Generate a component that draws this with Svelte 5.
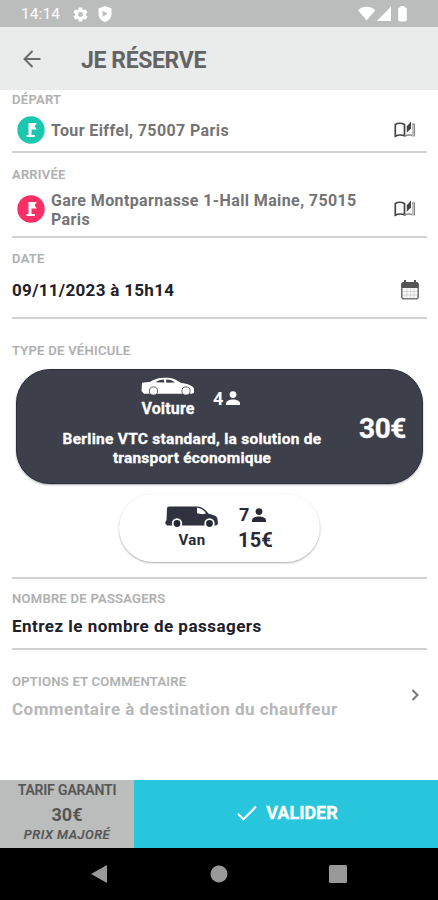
<script>
  const places = [
    { label: 'DÉPART', kind: 'from', lines: ['Tour Eiffel, 75007 Paris'] },
    { label: 'ARRIVÉE', kind: 'to', lines: ['Gare Montparnasse 1-Hall Maine, 75015', 'Paris'] }
  ];
</script>

{#snippet person()}
  <svg class="person" viewBox="0 0 14 14"><circle cx="7" cy="3.6" r="3.4" /><path d="M0 14v-1.8C0 9.6 4 8.4 7 8.4s7 1.2 7 3.8V14z" /></svg>
{/snippet}

<div class="screen">
  <div class="status">
    <span class="clock">14:14</span>
    <svg class="gear" viewBox="0 0 24 24"><path fill-rule="evenodd" d="M19.4 13c0-.3.1-.6.1-1s0-.7-.1-1l2.1-1.600c.2-.1.3-.4.1-.6l-2-3.500c-.1-.2-.4-.3-.6-.2l-2.500 1a7 7 0 0 0-1.700-1l-.4-2.600c0-.3-.2-.4-.5-.4h-4c-.2 0-.4.200-.5.400l-.4 2.600a8 8 0 0 0-1.700 1l-2.500-1c-.2-.1-.5 0-.6.200l-2 3.500c-.1.200-.1.500.1.600L4.500 11a8 8 0 0 0 0 2l-2.100 1.600c-.2.200-.2.400-.1.600l2 3.500c.1.200.4.300.6.200l2.500-1a7 7 0 0 0 1.700 1l.4 2.600c0 .3.200.5.500.5h4c.2 0 .4-.2.500-.5l.4-2.600a8 8 0 0 0 1.700-1l2.500 1c.2.100.5 0 .6-.2l2-3.500c.1-.2.100-.5-.1-.6zM12 15.500a3.500 3.500 0 1 1 0-7 3.500 3.500 0 0 1 0 7z" /></svg>
    <svg class="shield" viewBox="0 0 14 16"><path fill-rule="evenodd" d="M7 0l6.500 2.400V8c0 4-3 7-6.500 8C3.500 15 .5 12 .5 8V2.400zM4.700 4.800v6l5-3z" /></svg>
    <svg class="signals" viewBox="0 0 50 16"><path d="M0 4.200C4.500-.3 12.800-.3 17.300 4.200L8.700 14.500zM33 .5V15H18.800zM42.500 1.400V0h4v1.400h1.300q1 0 1 1V14q0 1.400-1.400 1.400h-5.800q-1.400 0-1.400-1.400V2.400q0-1 1-1z" /></svg>
  </div>

  <header>
    <svg class="back" viewBox="0 0 18 18"><path d="M17.500 9H1.500M9.500 1L1.500 9l8 8" /></svg>
    <h1>JE RÉSERVE</h1>
  </header>

  <main>
    {#each places as p}
      <section class={p.kind}>
        <div class="label">{p.label}</div>
        <div class="place">
          <svg class="pin" viewBox="0 0 28 28"><circle cx="14" cy="14" r="13.700" /><path d="M11.500 7h8.300l-2.200 3.200 2.200 3.300h-5.300v5.500h3.300v2H9.500v-2h2z" /></svg>
          <div class="address">{#each p.lines as line}<div>{line}</div>{/each}</div>
          <svg class="book" viewBox="0 0 22 18"><path class="pages" d="M1.300 3.500Q5.500 1 10.500 3.500V14.800Q5.500 13 1.300 15.200z" /><path class="edge" d="M10.500 15Q15 13 19 14.800M18 3.200H20.300V15.500" /><path class="edge light" d="M18.800 3.200V15" /><path class="quill" d="M12.800 5.200L17 .5V7.500L12.800 11.800z" /></svg>
        </div>
      </section>
    {/each}

    <section class="date">
      <div class="label">DATE</div>
      <div class="row"><span class="value when">09/11/2023 à 15h14</span>
        <svg class="calendar" viewBox="0 0 18 20"><rect x=".8" y="2.800" width="16.400" height="16" rx="2" fill="#f7f7f7" stroke="#777" stroke-width="1.600" /><path d="M.5 8V4q0-2 2-2h13q2 0 2 2v4z" fill="#555" /><path d="M4 0v4M14 0v4" stroke="#555" stroke-width="2" /><path d="M2 11.500h14M2 15h14M6 8.500v9M9.500 8.500v9M13 8.500v9" stroke="#ccc" stroke-width=".7" /></svg>
      </div>
    </section>

    <section class="type">
      <div class="label">TYPE DE VÉHICULE</div>
      <div class="vehicle sedan">
        <div class="details">
          <div class="summary">
            <div class="model">
              <svg class="car" viewBox="0 0 54 18"><path fill="#fff" d="M1 5.200L9.500 4.200C15 .5 20 .2 27 .3c6 .2 9.500 3 13 5.200 7 .8 11.500 2.500 13 5.500v4.200l-2 1H3L.5 13.500z" /><path fill="#3d3f4b" d="M14.500 4.800Q17.500 2.200 22.800 2l.6 3zM25 2c4.500 0 6.500 1 9 3l-8.500.2z" /><g fill="#fff" stroke="#3d3f4b" stroke-width=".8"><circle cx="12.500" cy="13.500" r="4.100" /><circle cx="45" cy="13.500" r="4.100" /></g></svg>
              <span>Voiture</span>
            </div>
            <div class="seats">4{@render person()}</div>
          </div>
          <div class="description"><div class="d1">Berline VTC standard, la solution de</div><div class="d2">transport économique</div></div>
        </div>
        <div class="price">30€</div>
      </div>
      <div class="vehicle van">
        <div class="model">
          <svg class="vanicon" viewBox="0 0 54 24"><path fill="#30323f" d="M2 3.500Q2 1.500 4 1.500h28c6 0 9 4.500 12 7.500 5 .8 8 2 8.500 5l.5 5-2 1.500H2L0 18l1.500-3z" /><path fill="#fff" d="M32 2.700c4 .2 7 2.700 9 5.700l-3.500.8-5.500-1z" /><g fill="#252735" stroke="#fff" stroke-width="1.800"><circle cx="12" cy="18.500" r="4.300" /><circle cx="44.500" cy="18.500" r="4.300" /></g></svg>
          <span>Van</span>
        </div>
        <div class="offer"><div class="seats">7{@render person()}</div><div class="cost">15€</div></div>
      </div>
    </section>

    <section class="passengers">
      <div class="label">NOMBRE DE PASSAGERS</div>
      <div class="value count">Entrez le nombre de passagers</div>
    </section>

    <section class="options">
      <div>
        <div class="label">OPTIONS ET COMMENTAIRE</div>
        <div class="value comment">Commentaire à destination du chauffeur</div>
      </div>
      <svg class="chevron" viewBox="0 0 8 12"><path d="M1.500 1l5 5-5 5" /></svg>
    </section>
  </main>

  <footer>
    <div class="fare"><div class="guarantee">TARIF GARANTI</div><div class="amount">30€</div><div class="raised">PRIX MAJORÉ</div></div>
    <button><svg viewBox="0 0 20 16"><path d="M1 8.800l5.500 5.500L19 1.500" /></svg><span>VALIDER</span></button>
  </footer>

  <nav>
    <svg viewBox="0 0 18 18"><path d="M17 0v18L1 9z" /></svg>
    <svg viewBox="0 0 18 18"><circle cx="9" cy="9" r="8.500" /></svg>
    <svg viewBox="0 0 18 18"><rect width="18" height="18" rx="1.500" /></svg>
  </nav>
</div>

<style>
  :global(body) { margin: 0; background: #fff; }
  * { box-sizing: border-box; }
  svg { display: block; flex: none; }
  .screen { width: 438px; height: 900px; display: flex; flex-direction: column; font-family: Roboto, sans-serif; font-weight: 700; background: #fff; overflow: hidden; white-space: nowrap; }
  .status { height: 27px; background: #bbbdbc; display: flex; align-items: center; padding: 1px 30px 0 21px; fill: #fff; }
  .clock { color: #fff; font-size: 15.500px; font-weight: 400; line-height: 26px; width: 51px; letter-spacing: .1px; }
  .gear { width: 17px; height: 17px; }
  .shield { width: 14px; height: 16px; margin-left: 9px; }
  .signals { width: 50px; height: 16px; margin-left: auto; }
  header { height: 63px; background: #eaeceb; display: flex; align-items: center; padding: 0 0 0 23px; }
  .back { width: 18px; height: 18px; fill: none; stroke: #6b6b6b; stroke-width: 2; }
  h1 { margin: 4px 0 0 40px; font-size: 23px; line-height: 28px; font-weight: 700; color: #646464; letter-spacing: -.38px; }
  main { flex: 1; padding: 0 11px 0 12px; }
  section { border-bottom: 2px solid #d2d2d2; }
  .label { font-size: 13px; line-height: 16px; font-weight: 500; color: #b0b0b0; letter-spacing: .28px; -webkit-text-stroke: .2px #b0b0b0; }
  .from { height: 63px; padding-top: 2px; }
  .to { height: 85px; padding-top: 14px; }
  .place { display: flex; align-items: center; height: 44px; padding: 0 11px 0 5px; }
  .to .place { height: 52px; }
  .pin { width: 28px; height: 28px; }
  .from .pin circle { fill: #1bc7af; }
  .to .pin circle { fill: #f92f65; }
  .pin path { fill: #fff; }
  .address { margin: 1px 0 0 6px; font-size: 16px; line-height: 19px; color: #747474; letter-spacing: .39px; }
  .to .address { margin-top: 2px; }
  .book { width: 22px; height: 18px; margin-left: auto; fill: none; }
  .pages { stroke: #444; stroke-width: 1.700; }
  .edge { stroke: #888; stroke-width: 1.500; }
  .light { stroke: #bbb; }
  .quill { fill: #444; }
  .date { height: 81px; padding-top: 13px; }
  .row { display: flex; align-items: center; justify-content: space-between; padding-right: 8px; height: 46px; }
  .value { font-size: 17px; line-height: 20px; color: #20202a; }
  .when { letter-spacing: .31px; }
  .calendar { width: 18px; height: 20px; }
  .type { height: 260px; padding-top: 24px; }
  .vehicle { display: flex; }
  .sedan { width: 407px; height: 115px; margin: 10px 0 0 4px; border-radius: 34px; background: #3d3f4b; border: 1px solid #292c3d; box-shadow: 0 1px 2px #aaa; color: #fff; align-items: center; }
  .details { width: 320px; margin-left: 15px; height: 113px; padding-top: 7px; }
  .summary { display: flex; height: 52px; padding-left: 109px; }
  .model { display: flex; flex-direction: column; align-items: center; width: 54px; font-size: 16px; line-height: 20px; }
  .sedan .model { letter-spacing: .15px; -webkit-text-stroke: .3px #fff; }
  .car { width: 54px; height: 19px; margin-bottom: 3px; }
  .car * { -webkit-text-stroke: 0; }
  .seats { display: flex; align-items: center; gap: 3px; font-size: 18px; line-height: 21px; }
  .sedan .seats { height: 22px; margin: 10px 0 0 18px; }
  .person { width: 14px; height: 14px; fill: currentColor; }
  .description { text-align: center; font-size: 15.500px; line-height: 19px; letter-spacing: .27px; -webkit-text-stroke: .3px #fff; margin-top: 1px; }
  .d2 { letter-spacing: .2px; }
  .price { font-size: 28px; line-height: 32px; margin: 4px 0 0 7px; letter-spacing: -.4px; -webkit-text-stroke: .3px #fff; }
  .van { width: 201px; height: 68px; margin: 10px auto 0 107px; border-radius: 34px; background: #fff; box-shadow: 0 1px 2px #aaa; color: #282934; padding: 11px 0 0 46px; }
  .vanicon { width: 54px; height: 24px; }
  .van .model { font-size: 15px; line-height: 22px; letter-spacing: .3px; }
  .offer { margin-left: 19px; }
  .cost { font-size: 20px; line-height: 26px; margin-top: 2px; letter-spacing: .2px; }
  .van .seats { margin-left: 1px; margin-top: -1px; }
  .passengers { height: 71px; padding-top: 12px; }
  .count { margin-top: 9px; letter-spacing: .48px; }
  .options { border: 0; display: flex; justify-content: space-between; padding: 24px 8px 0 0; }
  .comment { margin-top: 9px; color: #b7b7b7; letter-spacing: .46px; }
  .chevron { width: 8px; height: 12px; margin-top: 15px; fill: none; stroke: #777; stroke-width: 2; }
  footer { height: 68px; display: flex; }
  .fare { width: 134px; background: #bbbdbc; text-align: center; color: #555; padding-top: 1px; }
  .guarantee { font-size: 14px; line-height: 18px; font-weight: 500; letter-spacing: -.12px; -webkit-text-stroke: .2px #555; }
  .amount { font-size: 18px; line-height: 31px; }
  .raised { font-size: 13px; line-height: 10px; font-weight: 500; font-style: italic; letter-spacing: .48px; -webkit-text-stroke: .2px #555; }
  button { flex: 1; border: 0; padding: 0 0 2px 3px; margin: 0; background: #27c6dc; color: #fff; display: flex; align-items: center; justify-content: center; gap: 9px; font: 700 18px/22px Roboto, sans-serif; }
  button span { -webkit-text-stroke: .3px #fff; }
  button svg { width: 20px; height: 16px; fill: none; stroke: #fff; stroke-width: 2; }
  nav { height: 52px; background: #000; display: flex; justify-content: space-between; align-items: center; padding: 0 91px 0 90px; fill: #999; }
  nav svg { width: 18px; height: 18px; }
</style>
